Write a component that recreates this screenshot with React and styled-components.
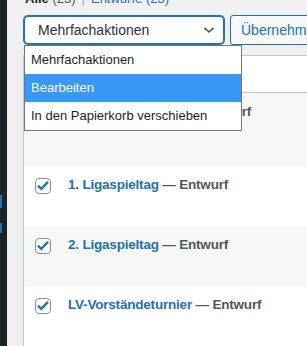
import React from 'react';
import styled, {createGlobalStyle} from 'styled-components';

const GlobalStyle = createGlobalStyle`
  html, body {
    margin: 0;
    padding: 0;
    background: #f0f0f1;
    font-family: "Liberation Sans", Arial, sans-serif;
    color: #1d2327;
    overflow: hidden;
  }
`;

const Page = styled.div`
  display: flex;
  width: 307px;
  height: 346px;
  overflow: hidden;
`;

const AdminMenu = styled.div`
  flex: 0 0 7px;
  display: flex;
  flex-direction: column;
  background: #1d2327;
`;

const MenuMark = styled.div`
  width: 2px;
  height: ${props => props.h}px;
  margin-top: ${props => props.gap}px;
  background: #2271b1;
`;

const Content = styled.div`
  flex: 1;
  min-width: 0;
  padding-left: 16px;
`;

const SubNav = styled.div`
  margin-top: -11px;
  height: 20px;
  line-height: 20px;
  font-size: 13px;
  padding-left: 2px;
  white-space: nowrap;
  color: #50575e;
`;

const Current = styled.span`
  font-weight: bold;
  color: #1d2327;
`;

const NavLink = styled.span`
  color: #2271b1;
`;

const Sep = styled.span`
  color: #a7aaad;
  margin: 0 6px;
`;

const TableNav = styled.div`
  position: relative;
  display: flex;
  align-items: flex-start;
  height: 30px;
  margin-top: 6px;
`;

const SelectBox = styled.div`
  flex: 0 0 auto;
  box-sizing: border-box;
  display: flex;
  align-items: center;
  justify-content: space-between;
  width: 200px;
  height: 28px;
  margin: 1px 0 0 1px;
  padding: 0 8px 0 13px;
  border: 1px solid #2271b1;
  border-radius: 4px;
  box-shadow: 0 0 0 1px #2271b1;
  background: #fff;
  font-size: 14px;
  color: #2c3338;
  white-space: nowrap;
`;

const ApplyButton = styled.button`
  flex: 0 0 auto;
  box-sizing: border-box;
  height: 30px;
  margin-left: 6px;
  padding: 0 10px;
  border: 1px solid #2271b1;
  border-radius: 3px;
  background: #f6f7f7;
  color: #2271b1;
  font-family: inherit;
  font-size: 14px;
  white-space: nowrap;
`;

const Dropdown = styled.ul`
  position: absolute;
  top: 30px;
  left: 1px;
  z-index: 2;
  box-sizing: border-box;
  width: 218px;
  margin: 0;
  padding: 0;
  list-style: none;
  border: 1px solid #767676;
  background: #fff;
`;

const Option = styled.li`
  height: 28px;
  line-height: 28px;
  padding-left: 6px;
  font-size: 13px;
  color: ${props => props.active ? '#fff' : '#1e1e1e'};
  background: ${props => props.active ? '#3898f8' : 'transparent'};
  white-space: nowrap;
`;

const ListTable = styled.div`
  margin-top: 10px;
  border-top: 1px solid #c3c4c7;
  border-left: 1px solid #c3c4c7;
  background: #fff;
`;

const HeaderRow = styled.div`
  display: flex;
  align-items: center;
  height: 36px;
  padding-left: 11px;
  border-bottom: 1px solid #c3c4c7;
  font-size: 14px;
  color: #2c3338;
`;

const HeaderLabel = styled.span`
  margin-left: 17px;
`;

const Row = styled.div`
  display: flex;
  align-items: flex-start;
  height: ${props => props.h}px;
  padding-left: 11px;
  background: ${props => props.striped ? '#f6f7f7' : '#fff'};
`;

const CheckBox = styled.span`
  flex: 0 0 16px;
  box-sizing: border-box;
  display: flex;
  width: 16px;
  height: 16px;
  margin-top: ${props => props.top}px;
  border: 1px solid #8c8f94;
  border-radius: 4px;
  background: #fff;
  svg {
    margin: -1px;
  }
`;

const Title = styled.div`
  margin: ${props => props.top}px 0 0 17px;
  line-height: 20px;
  font-size: 13.5px;
  letter-spacing: -0.2px;
  font-weight: bold;
  white-space: nowrap;
  color: #50575e;
`;

const TitleLink = styled.span`
  color: #2271b1;
`;

const Check = ({checked}) => (
  <CheckBox top={checked.top}>
    {checked.on && (
      <svg width="16" height="16" viewBox="0 0 16 16">
        <path d="M3 7.7 L6.3 10.8 L13 3.9" fill="none" stroke="#2271b1" strokeWidth="2.3"/>
      </svg>
    )}
  </CheckBox>
);

const posts = [
  {title: 'Saison-Abschluss', h: 74, top: 9},
  {title: '1. Ligaspieltag', h: 60, top: 8},
  {title: '2. Ligaspieltag', h: 60, top: 8},
  {title: 'LV-Vorständeturnier', h: 60, top: 8},
];

export default function App() {
  return (
    <Page>
      <GlobalStyle/>
      <AdminMenu>
        <MenuMark gap={195} h={13}/>
        <MenuMark gap={15} h={10}/>
      </AdminMenu>
      <Content>
        <SubNav>
          <Current>Alle</Current> (23)
          <Sep>|</Sep>
          <NavLink>Entwürfe (23)</NavLink>
        </SubNav>
        <TableNav>
          <SelectBox>
            Mehrfachaktionen
            <svg width="12" height="8" viewBox="0 0 12 8">
              <path d="M1.5 1.8 L6 6 L10.5 1.8" fill="none" stroke="#50575e" strokeWidth="1.6"/>
            </svg>
          </SelectBox>
          <ApplyButton type="button">Übernehmen</ApplyButton>
          <Dropdown>
            <Option>Mehrfachaktionen</Option>
            <Option active>Bearbeiten</Option>
            <Option>In den Papierkorb verschieben</Option>
          </Dropdown>
        </TableNav>
        <ListTable>
          <HeaderRow>
            <Check checked={{on: false, top: 0}}/>
            <HeaderLabel>Titel</HeaderLabel>
          </HeaderRow>
          {posts.map((post, i) => (
            <Row key={`post-${i}`} h={post.h} striped={i % 2 === 0}>
              <Check checked={{on: true, top: i === 0 ? 12 : 11}}/>
              <Title top={post.top}>
                <TitleLink>{post.title}</TitleLink> — Entwurf
              </Title>
            </Row>
          ))}
        </ListTable>
      </Content>
    </Page>
  );
}
